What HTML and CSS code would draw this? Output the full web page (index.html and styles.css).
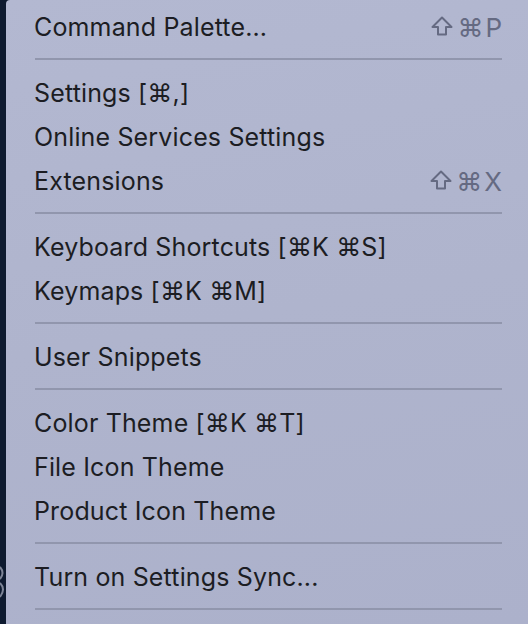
FILE: index.html
```html
<!DOCTYPE html>
<html>
<head>
<meta charset="utf-8">
<link rel="stylesheet" href="styles.css">
</head>
<body>
<div class="screen">
  <div class="strip">
    <svg class="behind" width="6" height="60" viewBox="0 0 6 60">
      <path d="M0 12 Q5 18 0 24" fill="none" stroke="#7d8496" stroke-width="2"/>
      <path d="M0 28 Q6 34 0 42" fill="none" stroke="#7d8496" stroke-width="2"/>
    </svg>
  </div>
  <div class="menu">
    <div class="item"><span class="label">Command Palette...</span><span class="keys"><svg class="shift" width="22" height="20" viewBox="0 0 22 20"><path d="M11 1.5 L20.5 11 L15 11 L15 18.5 L7 18.5 L7 11 L1.5 11 Z"/></svg><span class="cmd">⌘</span><span>P</span></span></div>
    <div class="sep"></div>
    <div class="item"><span class="label">Settings [⌘,]</span></div>
    <div class="item"><span class="label">Online Services Settings</span></div>
    <div class="item"><span class="label">Extensions</span><span class="keys"><svg class="shift" width="22" height="20" viewBox="0 0 22 20"><path d="M11 1.5 L20.5 11 L15 11 L15 18.5 L7 18.5 L7 11 L1.5 11 Z"/></svg><span class="cmd">⌘</span><span>X</span></span></div>
    <div class="sep"></div>
    <div class="item"><span class="label">Keyboard Shortcuts [⌘K ⌘S]</span></div>
    <div class="item"><span class="label">Keymaps [⌘K ⌘M]</span></div>
    <div class="sep"></div>
    <div class="item"><span class="label">User Snippets</span></div>
    <div class="sep"></div>
    <div class="item"><span class="label">Color Theme [⌘K ⌘T]</span></div>
    <div class="item"><span class="label">File Icon Theme</span></div>
    <div class="item"><span class="label">Product Icon Theme</span></div>
    <div class="sep"></div>
    <div class="item"><span class="label">Turn on Settings Sync...</span></div>
    <div class="sep"></div>
  </div>
</div>
</body>
</html>
```

FILE: styles.css
```css
html, body {
  margin: 0;
  padding: 0;
  height: 100%;
  overflow: hidden;
}
body {
  background: #0e1a2f;
  font-family: Inter, "Noto Sans", "DejaVu Sans", sans-serif;
}
.screen {
  display: flex;
  height: 624px;
}
.strip {
  width: 6px;
  background: #0e1a2f;
  position: relative;
}
.behind {
  position: absolute;
  left: 0;
  top: 555px;
}
.menu {
  flex: 1;
  background: linear-gradient(170deg, #b3b8d1 0%, #afb4cd 50%, #acb1cb 100%);
  padding: 5px 26px 0 29px;
  border-top-left-radius: 4px;
}
.item {
  height: 44px;
  display: flex;
  align-items: center;
  justify-content: space-between;
  font-size: 25px;
  color: #1c1d23;
  letter-spacing: 0.15px;
}
.label {
  margin-left: -1px;
}
.keys {
  display: flex;
  align-items: center;
  gap: 4px;
  color: #656a82;
  font-size: 26px;
  letter-spacing: 0;
}
.keys span {
  display: inline-block;
  text-align: center;
}
.shift {
  display: block;
  margin-top: -2px;
}
.shift path {
  fill: none;
  stroke: #656a82;
  stroke-width: 2;
  stroke-linejoin: round;
}
.cmd {
  width: 24px;
}
.sep {
  height: 2px;
  margin: 9px 0 11px;
  background: #9196ad;
}
```
